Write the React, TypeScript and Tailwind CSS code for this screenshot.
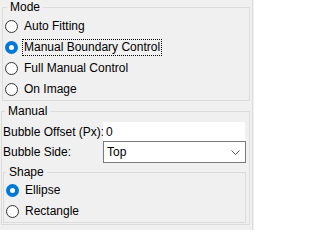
import React from 'react';

const FONT = { fontFamily: '"Liberation Sans", Arial, sans-serif' };

function Radio({ label, checked, focused }: { label: string; checked?: boolean; focused?: boolean }) {
  return (
    <div className="flex h-[21px] items-center pl-[2px]">
      {checked ? (
        <span className="flex h-[13px] w-[13px] items-center justify-center rounded-full bg-[#0078d7]">
          <span className="h-[5px] w-[5px] rounded-full bg-white" />
        </span>
      ) : (
        <span className="h-[13px] w-[13px] rounded-full border border-[#333333] bg-white" />
      )}
      <span
        className={
          'ml-[4px] px-[1px] leading-[15px] whitespace-nowrap ' +
          (focused ? 'border border-dotted border-black' : 'border border-transparent')
        }
      >
        {label}
      </span>
    </div>
  );
}

export default function App() {
  return (
    <div className="h-[230px] w-[254px] bg-[#f0f0f0] text-[12px] text-black" style={FONT}>
      <div className="h-[230px] w-[253px] border-r border-[#dcdcdc]">
        {/* Mode */}
        <fieldset className="ml-[2px] h-[101px] w-[248px] border border-[#dcdcdc]">
          <legend className="ml-[4px] px-[3px] leading-[14px]">Mode</legend>
          <div className="pt-[2px]">
            <Radio label="Auto Fitting" />
            <Radio label="Manual Boundary Control" checked focused />
            <Radio label="Full Manual Control" />
            <Radio label="On Image" />
          </div>
        </fieldset>

        {/* Manual */}
        <fieldset className="ml-[1px] mt-[3px] h-[121px] w-[249px] border border-[#dcdcdc]">
          <legend className="ml-[3px] px-[3px] leading-[14px]">Manual</legend>
          <div className="mt-[4px] flex">
            <div className="flex h-[19px] w-[101px] items-center whitespace-nowrap pl-[1px]">Bubble Offset (Px):</div>
            <div className="flex h-[19px] w-[142px] items-center bg-white pl-[3px]">0</div>
          </div>
          <div className="flex">
            <div className="flex h-[22px] w-[101px] items-center whitespace-nowrap pl-[1px]">Bubble Side:</div>
            <div className="flex h-[22px] w-[143px] items-center justify-between border border-[#7a7a7a] bg-white pl-[3px] pr-[5px]">
              <span>Top</span>
              <svg width="9" height="5" viewBox="0 0 9 5">
                <polyline points="0.5,0.5 4.5,4.5 8.5,0.5" fill="none" stroke="#555555" strokeWidth="1" />
              </svg>
            </div>
          </div>

          {/* Shape */}
          <fieldset className="ml-[1px] mt-[2px] h-[58px] w-[243px] border border-[#dcdcdc]">
            <legend className="ml-[2px] px-[3px] leading-[14px]">Shape</legend>
            <div className="pt-[1px]">
              <Radio label="Ellipse" checked />
              <Radio label="Rectangle" />
            </div>
          </fieldset>
        </fieldset>
      </div>
    </div>
  );
}
